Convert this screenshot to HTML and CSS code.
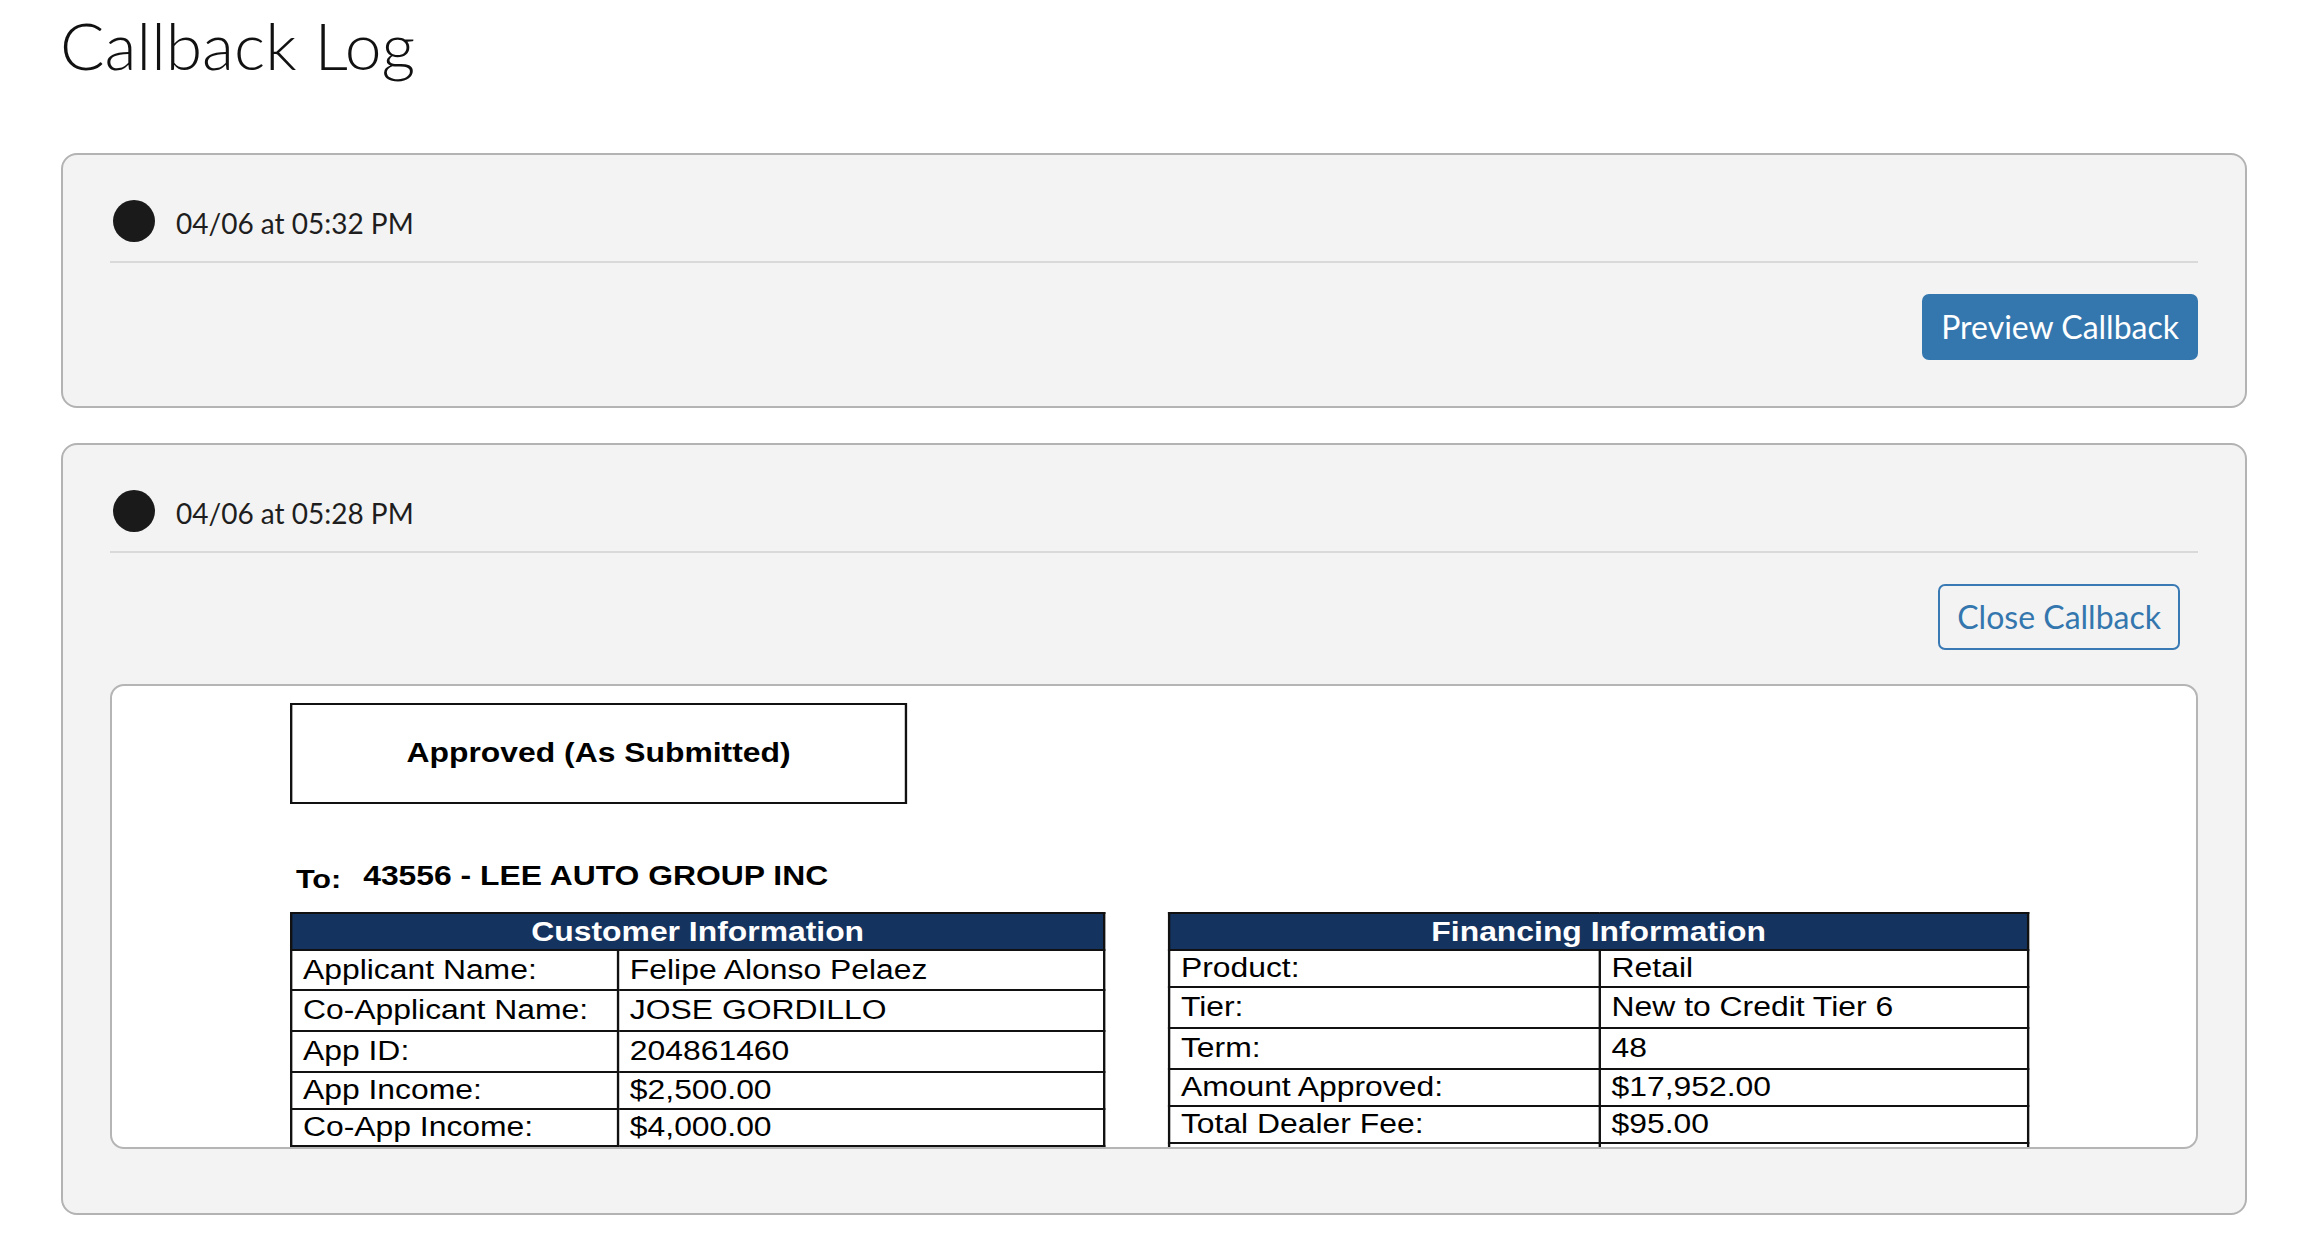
FILE: index.html
```html
<!DOCTYPE html>
<html lang="en">
<head>
<meta charset="utf-8">
<title>Callback Log</title>
<link rel="stylesheet" href="styles.css">
</head>
<body>
<main class="page">
  <h1 class="title">Callback Log</h1>

  <section class="card">
    <header class="card-head">
      <span class="dot"></span>
      <span class="stamp">04/06 at 05:32 PM</span>
    </header>
    <div class="card-actions">
      <button class="btn btn-solid" type="button">Preview Callback</button>
    </div>
  </section>

  <section class="card card-open">
    <header class="card-head">
      <span class="dot"></span>
      <span class="stamp">04/06 at 05:28 PM</span>
    </header>
    <div class="card-actions">
      <button class="btn btn-outline" type="button">Close Callback</button>
    </div>
    <div class="preview">
      <div class="doc">
        <div class="status">Approved (As Submitted)</div>
        <p class="to"><span class="to-label">To:</span><span class="to-name">43556 - LEE AUTO GROUP INC</span></p>
        <div class="tables">
          <table class="info cust">
            <colgroup><col class="cust-key"><col></colgroup>
            <thead><tr><th colspan="2">Customer Information</th></tr></thead>
            <tbody>
              <tr class="row-m"><td>Applicant Name:</td><td>Felipe Alonso Pelaez</td></tr>
              <tr class="row-l"><td>Co-Applicant Name:</td><td>JOSE GORDILLO</td></tr>
              <tr class="row-l"><td>App ID:</td><td>204861460</td></tr>
              <tr class="row-s"><td>App Income:</td><td>$2,500.00</td></tr>
              <tr class="row-s"><td>Co-App Income:</td><td>$4,000.00</td></tr>
            </tbody>
          </table>
          <table class="info fin">
            <colgroup><col class="fin-key"><col></colgroup>
            <thead><tr><th colspan="2">Financing Information</th></tr></thead>
            <tbody>
              <tr class="row-s"><td>Product:</td><td>Retail</td></tr>
              <tr class="row-l"><td>Tier:</td><td>New to Credit Tier 6</td></tr>
              <tr class="row-l"><td>Term:</td><td>48</td></tr>
              <tr class="row-s"><td>Amount Approved:</td><td>$17,952.00</td></tr>
              <tr class="row-s"><td>Total Dealer Fee:</td><td>$95.00</td></tr>
              <tr class="row-m"><td>&nbsp;</td><td>&nbsp;</td></tr>
            </tbody>
          </table>
        </div>
      </div>
    </div>
  </section>
</main>
</body>
</html>
```
FILE: styles.css
```css
* { box-sizing: border-box; }

html, body {
  margin: 0;
  background: #ffffff;
}

body {
  font-family: Lato, "Liberation Sans", Arial, sans-serif;
  color: #1b1b1b;
}

.page {
  padding: 5px 65px 40px 61px;
}

.title {
  margin: 0 0 0 -1px;
  font-size: 66px;
  line-height: 80px;
  font-weight: 300;
  color: #111111;
}

.card {
  margin-top: 68px;
  border: 2px solid #b3b3b3;
  border-radius: 16px;
  background: #f3f3f3;
  padding: 0 47px 46px;
}

.card + .card {
  margin-top: 35px;
}

.card-head {
  display: flex;
  align-items: center;
  gap: 21px;
  padding: 45px 0 19px 3px;
  border-bottom: 2px solid #d9d9d9;
}

.dot {
  flex: none;
  width: 42px;
  height: 42px;
  border-radius: 50%;
  background: #1a1a1a;
}

.stamp {
  font-size: 28px;
  line-height: 34px;
  padding-top: 3px;
  color: #1e1e1e;
}

.card-actions {
  display: flex;
  justify-content: flex-end;
  padding-top: 31px;
}

.btn {
  font-family: Lato, "Liberation Sans", Arial, sans-serif;
  font-size: 32px;
  font-weight: 400;
  height: 66px;
  line-height: 62px;
  padding: 0 17px;
  border: 2px solid #3477ae;
  border-radius: 7px;
  cursor: pointer;
}

.btn-solid {
  background: #3477ae;
  color: #ffffff;
}

.btn-outline {
  background: transparent;
  color: #3477ae;
  border-color: #3a7ab4;
  margin-right: 18px;
}

.preview {
  margin: 34px 0 18px;
  height: 465px;
  border: 2px solid #b5b5b5;
  border-radius: 14px;
  background: #ffffff;
  overflow: hidden;
  padding: 17px 0 0 178px;
}

.doc {
  transform: scaleX(1.18);
  transform-origin: 0 0;
  font-family: "Liberation Sans", Arial, sans-serif;
  color: #000000;
}

.status {
  width: 523px;
  height: 101px;
  border: 2px solid #111111;
  display: flex;
  align-items: center;
  justify-content: center;
  font-weight: 700;
  font-size: 27px;
}

.to {
  margin: 56px 0 0;
  padding-left: 5px;
  font-weight: 700;
  font-size: 27px;
  line-height: 32px;
  white-space: nowrap;
}

.to-label {
  display: inline-block;
  width: 57px;
  font-size: 26px;
  vertical-align: -3px;
}

.tables {
  display: flex;
  align-items: flex-start;
  gap: 53px;
  margin-top: 17px;
}

.info {
  border-collapse: collapse;
  font-size: 27px;
  table-layout: fixed;
}

.info th {
  background: #14335f;
  color: #ffffff;
  font-weight: 700;
  height: 37px;
  line-height: 30px;
  padding: 0;
  border: 2px solid #111111;
  text-align: center;
}

.info td {
  border: 2px solid #111111;
  padding: 0 0 0 9px;
  white-space: nowrap;
  line-height: 31px;
}

.cust { width: 691px; }
.cust-key { width: 277px; }
.fin { width: 730px; }
.fin-key { width: 365px; }

.row-s td { height: 37px; }
.row-m td { height: 40px; }
.row-l td { height: 41px; }
```
